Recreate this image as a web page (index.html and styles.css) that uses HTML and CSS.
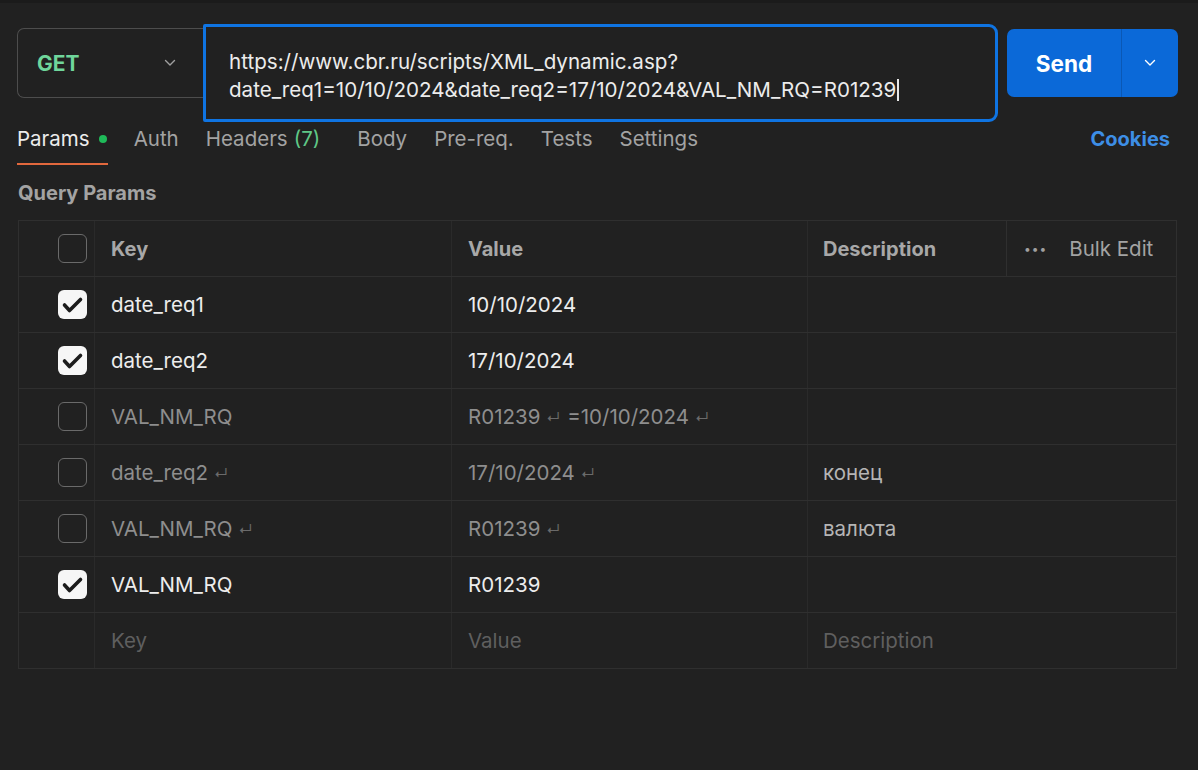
FILE: index.html
```html
<!DOCTYPE html>
<html>
<head>
<meta charset="utf-8">
<link rel="stylesheet" href="styles.css">
</head>
<body>
<div class="topline"></div>
<div class="request-bar">
  <div class="method">
    <span class="method-name">GET</span>
    <svg class="chev" width="12" height="8" viewBox="0 0 12 8"><path d="M1.5 1.5 L6 6 L10.5 1.5" fill="none" stroke="#a0a0a0" stroke-width="1.4" stroke-linecap="round" stroke-linejoin="round"/></svg>
  </div>
  <div class="url">
    <div class="url-line">https://www.cbr.ru/scripts/XML_dynamic.asp?</div>
    <div class="url-line">date_req1=10/10/2024&amp;date_req2=17/10/2024&amp;VAL_NM_RQ=R01239<span class="caret"></span></div>
  </div>
  <div class="send">
    <div class="send-main">Send</div>
    <div class="send-drop">
      <svg width="12" height="8" viewBox="0 0 12 8"><path d="M1.5 1.5 L6 6 L10.5 1.5" fill="none" stroke="#ffffff" stroke-width="1.4" stroke-linecap="round" stroke-linejoin="round"/></svg>
    </div>
  </div>
</div>

<div class="tabs">
  <div class="tab active">Params <span class="dot"></span></div>
  <div class="tab">Auth</div>
  <div class="tab headers">Headers <span class="green">(7)</span></div>
  <div class="tab">Body</div>
  <div class="tab">Pre-req.</div>
  <div class="tab">Tests</div>
  <div class="tab">Settings</div>
  <div class="spacer"></div>
  <div class="cookies">Cookies</div>
</div>

<div class="section-title">Query Params</div>

<div class="table">
  <div class="row head">
    <div class="c-check"><span class="box"></span></div>
    <div class="c-key">Key</div>
    <div class="c-val">Value</div>
    <div class="c-desc">Description</div>
    <div class="c-bulk"><span class="dots">•••</span><span>Bulk Edit</span></div>
  </div>
  <div class="row on">
    <div class="c-check"><span class="box checked"><svg width="29" height="29" viewBox="0 0 29 29"><path d="M6.5 15 L11.5 20.5 L22.5 9.5" fill="none" stroke="#1c1c1c" stroke-width="3.6" stroke-linecap="round" stroke-linejoin="round"/></svg></span></div>
    <div class="c-key">date_req1</div>
    <div class="c-val">10/10/2024</div>
    <div class="c-desc"></div>
    <div class="c-bulk"></div>
  </div>
  <div class="row on">
    <div class="c-check"><span class="box checked"><svg width="29" height="29" viewBox="0 0 29 29"><path d="M6.5 15 L11.5 20.5 L22.5 9.5" fill="none" stroke="#1c1c1c" stroke-width="3.6" stroke-linecap="round" stroke-linejoin="round"/></svg></span></div>
    <div class="c-key">date_req2</div>
    <div class="c-val">17/10/2024</div>
    <div class="c-desc"></div>
    <div class="c-bulk"></div>
  </div>
  <div class="row off">
    <div class="c-check"><span class="box"></span></div>
    <div class="c-key">VAL_NM_RQ</div>
    <div class="c-val">R01239<span class="ret">↵</span>=10/10/2024<span class="ret">↵</span></div>
    <div class="c-desc"></div>
    <div class="c-bulk"></div>
  </div>
  <div class="row off">
    <div class="c-check"><span class="box"></span></div>
    <div class="c-key">date_req2<span class="ret">↵</span></div>
    <div class="c-val">17/10/2024<span class="ret">↵</span></div>
    <div class="c-desc">конец</div>
    <div class="c-bulk"></div>
  </div>
  <div class="row off">
    <div class="c-check"><span class="box"></span></div>
    <div class="c-key">VAL_NM_RQ<span class="ret">↵</span></div>
    <div class="c-val">R01239<span class="ret">↵</span></div>
    <div class="c-desc">валюта</div>
    <div class="c-bulk"></div>
  </div>
  <div class="row on">
    <div class="c-check"><span class="box checked"><svg width="29" height="29" viewBox="0 0 29 29"><path d="M6.5 15 L11.5 20.5 L22.5 9.5" fill="none" stroke="#1c1c1c" stroke-width="3.6" stroke-linecap="round" stroke-linejoin="round"/></svg></span></div>
    <div class="c-key">VAL_NM_RQ</div>
    <div class="c-val">R01239</div>
    <div class="c-desc"></div>
    <div class="c-bulk"></div>
  </div>
  <div class="row placeholder">
    <div class="c-check"></div>
    <div class="c-key">Key</div>
    <div class="c-val">Value</div>
    <div class="c-desc">Description</div>
    <div class="c-bulk"></div>
  </div>
</div>
</body>
</html>
```

FILE: styles.css
```css
* { box-sizing: border-box; }
html, body {
  margin: 0;
  padding: 0;
  background: #212121;
  font-family: Inter, "Noto Sans", "Liberation Sans", sans-serif;
  color: #e6e6e6;
}
body { width: 1198px; height: 770px; overflow: hidden; }

.topline { height: 3px; background: #1b1b1b; }

.request-bar {
  display: flex;
  align-items: flex-start;
  padding: 21px 20px 0 17px;
}
.method {
  margin-top: 4px;
  width: 196px;
  height: 70px;
  border: 1.5px solid #4d4d4d;
  border-right: none;
  border-radius: 7px 0 0 7px;
  display: flex;
  align-items: center;
  padding: 0 37px 0 19px;
  justify-content: space-between;
  margin-right: -10px;
}
.method-name {
  color: #6fd69b;
  font-weight: 700;
  font-size: 21px;
}

.url {
  position: relative;
  width: 795px;
  height: 98px;
  border: 3px solid #0f74e2;
  border-radius: 2px 9px 9px 2px;
  background: #212121;
  padding: 21px 0 0 23px;
  font-size: 20.6px;
  line-height: 28px;
  color: #ececec;
}
.url-line { white-space: nowrap; }
.caret {
  display: inline-block;
  width: 1.5px;
  height: 22px;
  background: #e8e8e8;
  vertical-align: -4px;
  margin-left: 1px;
}

.send {
  margin-left: 9px;
  margin-top: 5px;
  width: 171px;
  height: 68px;
  background: #0b69d8;
  border-radius: 7px;
  display: flex;
  color: #fff;
}
.send-main {
  width: 115px;
  display: flex;
  align-items: center;
  justify-content: center;
  font-weight: 700;
  font-size: 22.5px;
  border-right: 1px solid #0a58b5;
}
.send-drop {
  flex: 1;
  display: flex;
  align-items: center;
  justify-content: center;
}

.tabs {
  display: flex;
  align-items: center;
  height: 44px;
  padding: 0 28px 11px 17px;
  font-size: 20.5px;
  color: #a3a3a3;
  position: relative;
}
.tab {
  position: relative;
  display: flex;
  align-items: center;
  margin-right: 27px;
}
.tab.headers { margin-right: 37px; }
.tab.active { color: #ececec; }
.tab.active::after {
  content: "";
  position: absolute;
  left: 0;
  right: -1px;
  bottom: -14px;
  height: 2px;
  background: #e2683d;
}
.tab .dot {
  display: inline-block;
  width: 8px;
  height: 8px;
  border-radius: 50%;
  background: #1fba59;
  margin-left: 9px;
}
.green { color: #5fc887; margin-left: 6px; }
.spacer { flex: 1; }
.cookies { color: #3d8ee6; font-weight: 700; font-size: 20px; }

.section-title {
  padding: 15px 18px 0;
  height: 54px;
  font-size: 20px;
  font-weight: 700;
  color: #a3a3a3;
}

.table {
  margin: 0 21px 0 18px;
  border: 1px solid #2f2f2f;
  border-bottom: none;
}
.row {
  display: grid;
  grid-template-columns: 76px 357px 356px 199px 1fr;
  height: 56px;
  border-bottom: 1.5px solid #2f2f2f;
  font-size: 20.5px;
}
.row > div {
  display: flex;
  align-items: center;
  border-right: 1.5px solid #2a2a2a;
  white-space: nowrap;
}
.row > div:last-child { border-right: none; }
.row.head > div.c-desc { border-right: 1.5px solid #2f2f2f; }
.row:not(.head) > div.c-desc { border-right: none; }

.c-check { justify-content: flex-end; padding-right: 7px; }
.c-key { padding-left: 16px; }
.c-val { padding-left: 16px; }
.c-desc { padding-left: 15px; }
.c-bulk { padding-left: 17px; gap: 22px; }

.head { color: #a8a8a8; font-weight: 700; font-size: 20px; }
.head .c-bulk { font-weight: 400; color: #a3a3a3; font-size: 20.5px; }
.dots { font-size: 12px; letter-spacing: 1px; color: #a0a0a0; }

.on { color: #ededed; }
.off { color: #8e8e8e; }
.off .c-desc { color: #b5b5b5; }
.placeholder { color: #5f5f5f; }
.ret { font-size: 14px; color: #6a6a6a; margin: 2px 7px 0 6px; }

.box {
  width: 29px;
  height: 29px;
  border: 1.5px solid #6a6a6a;
  border-radius: 6px;
  display: inline-block;
}
.box.checked {
  background: #f6f6f6;
  border: none;
  display: block;
}
.box.checked svg { display: block; }
```
